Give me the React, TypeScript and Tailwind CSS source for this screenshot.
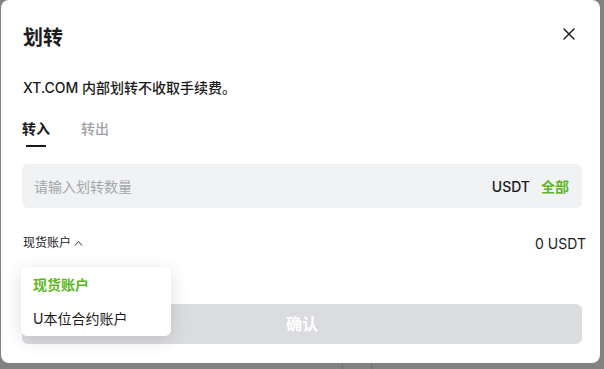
import React from "react";

export default function App() {
  const font = { fontFamily: '"Inter", "Noto Sans CJK SC", sans-serif' };
  return (
    <div className="w-[604px] h-[369px] bg-[#828282] flex flex-col overflow-hidden" style={font}>
      <div className="relative ml-[1px] w-[599px] h-[363px] bg-white rounded-[8px] shrink-0 flex flex-col px-[21px]">
        {/* header */}
        <div className="flex items-center justify-between pt-[26px] h-[50px]">
          <div className="text-[20px] leading-[24px] font-bold text-[#1b1b1b] pl-[1px]">划转</div>
          <button className="w-[16px] h-[16px] mr-[2px] -mt-[9px] flex items-center justify-center text-[#222]">
            <svg width="12" height="12" viewBox="0 0 12 12" fill="none" stroke="currentColor" strokeWidth="1.5" strokeLinecap="round">
              <path d="M1 1L11 11M11 1L1 11" />
            </svg>
          </button>
        </div>
        <div className="mt-[28px] text-[14px] leading-[20px] font-medium text-[#1b1b1b] pl-[1px]">
          XT.COM 内部划转不收取手续费。
        </div>
        {/* tabs */}
        <div className="mt-[21px] flex gap-[31px]">
          <div className="flex flex-col items-center">
            <span className="text-[14px] leading-[20px] font-bold text-[#1b1b1b]">转入</span>
            <span className="mt-[6px] w-[20px] h-[2px] bg-[#1b1b1b]"></span>
          </div>
          <span className="text-[14px] leading-[20px] font-medium text-[#9fa2a7]">转出</span>
        </div>
        {/* input */}
        <div className="mt-[17px] h-[44px] w-[560px] rounded-[6px] bg-[#f1f2f4] flex items-center pl-[12px] pr-[13px]">
          <span className="flex-1 text-[14px] text-[#a3a6ab]">请输入划转数量</span>
          <span className="text-[14px] font-medium text-[#1b1b1b]">USDT</span>
          <span className="ml-[11px] text-[14px] font-bold text-[#5cb81d]">全部</span>
        </div>
        {/* account row */}
        <div className="mt-[26px] flex items-center justify-between w-[560px] h-[18px] pl-[1px]">
          <div className="flex items-center gap-[3px] text-[12px] text-[#1b1b1b]">
            <span>现货账户</span>
            <svg width="9" height="6" viewBox="0 0 9 6" fill="none" stroke="#333" strokeWidth="1">
              <path d="M1 5.5L4.5 1.5L8 5.5" />
            </svg>
          </div>
          <span className="text-[14px] text-[#1b1b1b] -mr-[4px]">0 USDT</span>
        </div>
        {/* confirm */}
        <div className="mt-[52px] h-[40px] w-[560px] rounded-[6px] bg-[#dbdcdf] flex items-center justify-center">
          <span className="text-[16px] font-bold text-white">确认</span>
        </div>
        {/* dropdown */}
        <div className="absolute left-[20px] top-[267px] w-[150px] h-[69px] bg-white rounded-[6px] shadow-[0_4px_18px_rgba(0,0,0,0.13)] flex flex-col justify-center gap-[14px] pl-[12px]">
          <span className="text-[14px] leading-[20px] font-bold text-[#5cb81d]">现货账户</span>
          <span className="text-[14px] leading-[20px] text-[#1b1b1b]">U本位合约账户</span>
        </div>
      </div>
      <div className="flex-1 flex">
        <div className="ml-[342px] w-[30px] border-x border-[#707070]"></div>
      </div>
    </div>
  );
}
